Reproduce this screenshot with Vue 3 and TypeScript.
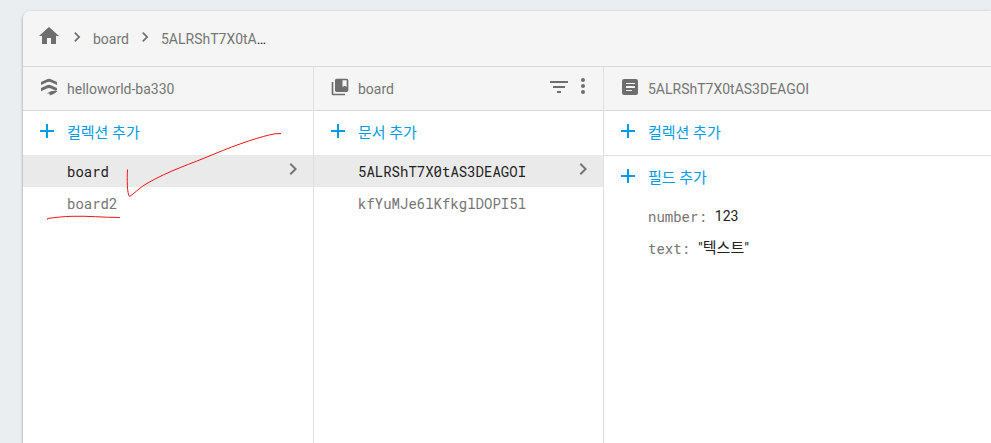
<script setup lang="ts">
import { ref } from 'vue'

interface Entry {
  id: string
}

interface Field {
  name: string
  value: string
  type: 'number' | 'string'
}

const collections: Entry[] = [{ id: 'board' }, { id: 'board2' }]
const documents: Entry[] = [{ id: '5ALRShT7X0tAS3DEAGOI' }, { id: 'kfYuMJe6lKfkglDOPI5l' }]
const fields: Field[] = [
  { name: 'number', value: '123', type: 'number' },
  { name: 'text', value: '"텍스트"', type: 'string' },
]

const activeCollection = ref('board')
const activeDocument = ref('5ALRShT7X0tAS3DEAGOI')

const plusPath = 'M19 13h-6v6h-2v-6H5v-2h6V5h2v6h6v2z'
const chevronPath = 'M10 6 8.59 7.41 13.17 12l-4.58 4.59L10 18l6-6z'
</script>

<template>
  <div class="page">
    <main class="card">
      <nav class="breadcrumbs">
        <a class="crumb-home" href="#" aria-label="Home">
          <svg class="icon" viewBox="0 0 24 24"><path d="M10 20v-6h4v6h5v-8h3L12 3 2 12h3v8z" /></svg>
        </a>
        <svg class="icon separator" viewBox="0 0 24 24"><path :d="chevronPath" /></svg>
        <a class="crumb" href="#">board</a>
        <svg class="icon separator" viewBox="0 0 24 24"><path :d="chevronPath" /></svg>
        <span class="crumb-clip"><a class="crumb" href="#">{{ activeDocument }}</a></span>
      </nav>

      <div class="panels">
        <section class="panel">
          <header class="panel-header">
            <svg class="icon kind" viewBox="0 0 20 20">
              <path d="M2 5 8 2.200Q10 1.400 12 2.200L18 5V8L12 5.200Q10 4.400 8 5.200L2 8z" />
              <path d="M2 11 8 8.200Q10 7.400 12 8.200L18 11V13.300L16.500 13.700 12 11.500Q10 10.600 8 11.500L2 14.200z" />
              <path d="M8 16.200 12.500 14 18.200 14Q17.500 16.200 10.500 18.600L10.800 16.800z" />
            </svg>
            <h2>helloworld-ba330</h2>
          </header>
          <button type="button" class="add">
            <svg class="icon" viewBox="0 0 24 24"><path :d="plusPath" /></svg>
            <span>컬렉션 추가</span>
          </button>
          <button
            v-for="item in collections"
            :key="item.id"
            type="button"
            class="entry"
            :class="{ active: item.id === activeCollection }"
            @click="activeCollection = item.id"
          >
            <span>{{ item.id }}</span>
            <svg v-if="item.id === activeCollection" class="icon" viewBox="0 0 24 24"><path :d="chevronPath" /></svg>
          </button>
        </section>

        <section class="panel">
          <header class="panel-header">
            <svg class="icon kind" viewBox="0 0 24 24">
              <path d="M4 6H2v14c0 1.100.9 2 2 2h14v-2H4V6z" />
              <path d="M20 2H8c-1.100 0-2 .9-2 2v12c0 1.100.9 2 2 2h12c1.100 0 2-.9 2-2V4c0-1.100-.9-2-2-2zm0 10-2.500-1.500L15 12V4h5v8z" />
            </svg>
            <h2>board</h2>
            <div class="actions">
              <button type="button" class="action" aria-label="Filter">
                <svg class="icon" viewBox="0 0 24 24"><path d="M10 18h4v-2h-4v2zM3 6v2h18V6H3zm3 7h12v-2H6v2z" /></svg>
              </button>
              <button type="button" class="action" aria-label="More">
                <svg class="icon" viewBox="0 0 24 24">
                  <circle cx="12" cy="5" r="2" />
                  <circle cx="12" cy="11" r="2" />
                  <circle cx="12" cy="17" r="2" />
                </svg>
              </button>
            </div>
          </header>
          <button type="button" class="add">
            <svg class="icon" viewBox="0 0 24 24"><path :d="plusPath" /></svg>
            <span>문서 추가</span>
          </button>
          <button
            v-for="item in documents"
            :key="item.id"
            type="button"
            class="entry"
            :class="{ active: item.id === activeDocument }"
            @click="activeDocument = item.id"
          >
            <span>{{ item.id }}</span>
            <svg v-if="item.id === activeDocument" class="icon" viewBox="0 0 24 24"><path :d="chevronPath" /></svg>
          </button>
        </section>

        <section class="panel">
          <header class="panel-header">
            <svg class="icon kind" viewBox="0 0 20 20">
              <path fill-rule="evenodd" d="M4 2h12a2 2 0 0 1 2 2v12a2 2 0 0 1-2 2H4a2 2 0 0 1-2-2V4a2 2 0 0 1 2-2zM6 6v1h9V6zM6 9v2h9V9zM6 13v1h6v-1z" />
            </svg>
            <h2>5ALRShT7X0tAS3DEAGOI</h2>
          </header>
          <button type="button" class="add">
            <svg class="icon" viewBox="0 0 24 24"><path :d="plusPath" /></svg>
            <span>컬렉션 추가</span>
          </button>
          <div class="fields">
            <button type="button" class="add">
              <svg class="icon" viewBox="0 0 24 24"><path :d="plusPath" /></svg>
              <span>필드 추가</span>
            </button>
            <dl>
              <div v-for="field in fields" :key="field.name" class="field">
                <dt>{{ field.name }}:</dt>
                <dd :class="field.type">{{ field.value }}</dd>
              </div>
            </dl>
          </div>
        </section>
      </div>
    </main>

    <svg class="markup" viewBox="0 0 300 240" aria-hidden="true">
      <path d="M127.500 169.500C127 179 127 194 129.500 196.500C134 194 139 188 146 184C170 170 191 164 213 154.500C238 144 262 136 275 133.800L281 133.500" />
      <path d="M47.500 219.500V218.500C55 217.500 63 216.500 72 216.300C88 215.800 103 217.500 120 217.500" />
    </svg>
  </div>
</template>

<style>
body {
  margin: 0;
}
</style>

<style scoped>
.page {
  position: relative;
  box-sizing: border-box;
  display: flex;
  min-height: 100vh;
  padding: 11px 0 0 23px;
  overflow: hidden;
  background: #eaeef1;
  color: #212121;
  font: 14px/20px Roboto, 'Noto Sans CJK KR', sans-serif;
}

.card {
  flex: 1;
  min-width: 0;
  display: flex;
  flex-direction: column;
  background: #fff;
  border-radius: 8px 0 0 0;
  box-shadow: 0 1px 3px rgba(0, 0, 0, 0.4);
}

.icon {
  display: block;
  flex: none;
  width: 24px;
  height: 24px;
  fill: currentColor;
}

.breadcrumbs {
  display: flex;
  align-items: center;
  height: 55px;
  padding-left: 14px;
  background: #f5f5f5;
  border-bottom: 1px solid #d9d9d9;
  border-radius: 8px 0 0 0;
  color: #6e6e6e;
}

.crumb-home {
  padding-bottom: 6px;
  color: #6e6e6e;
}

.separator {
  width: 20px;
  height: 20px;
  margin: 0 6px;
  padding-bottom: 4px;
}

.crumb {
  color: #757575;
  text-decoration: none;
}

.crumb-clip {
  width: 106px;
  overflow: hidden;
  color: #212121;
  text-overflow: ellipsis;
  white-space: nowrap;
}

.panels {
  flex: 1;
  display: grid;
  grid-template-columns: 291fr 290fr 387fr;
}

.panel {
  min-width: 0;
  border-right: 1px solid #e0e0e0;
}

.panel:last-child {
  border-right: 0;
}

.panel-header {
  display: flex;
  align-items: center;
  height: 43px;
  padding: 0 8px 0 16px;
  background: #f5f5f5;
  border-bottom: 1px solid #d9d9d9;
  color: #6e6e6e;
}

.kind {
  width: 20px;
  height: 20px;
  margin-right: 8px;
  padding-bottom: 4px;
}

h2 {
  margin: 0;
  color: #757575;
  font-size: 14px;
  font-weight: 400;
}

.actions {
  display: flex;
  margin-left: auto;
  padding-bottom: 4px;
}

button {
  padding: 0;
  border: 0;
  background: none;
  color: inherit;
  font: inherit;
  text-align: left;
  cursor: pointer;
}

.add {
  display: flex;
  align-items: center;
  gap: 8px;
  width: 100%;
  height: 44px;
  padding-left: 12px;
  color: #039be5;
  font-size: 15px;
}

.add .icon {
  padding-bottom: 4px;
}

.entry {
  display: flex;
  align-items: center;
  justify-content: space-between;
  width: 100%;
  height: 32px;
  padding: 2px 8px 0 44px;
  color: #757575;
  font-family: 'Roboto Mono', 'Liberation Mono', monospace;
}

.entry .icon {
  padding-bottom: 6px;
  color: #757575;
}

.entry.active {
  background: #eaeaea;
  color: #212121;
}

.fields {
  border-top: 1px solid #e0e0e0;
}

dl {
  margin: 0;
}

.field {
  display: flex;
  align-items: center;
  gap: 8px;
  height: 32px;
  padding-left: 44px;
}

dt {
  padding-top: 2px;
  color: #757575;
  font-family: 'Roboto Mono', 'Liberation Mono', monospace;
}

dd {
  margin: 0;
}

.string {
  font-size: 15px;
}

.markup {
  position: absolute;
  top: 0;
  left: 0;
  width: 300px;
  height: 240px;
  fill: none;
  stroke: #f01414;
  stroke-width: 1;
  pointer-events: none;
}
</style>
